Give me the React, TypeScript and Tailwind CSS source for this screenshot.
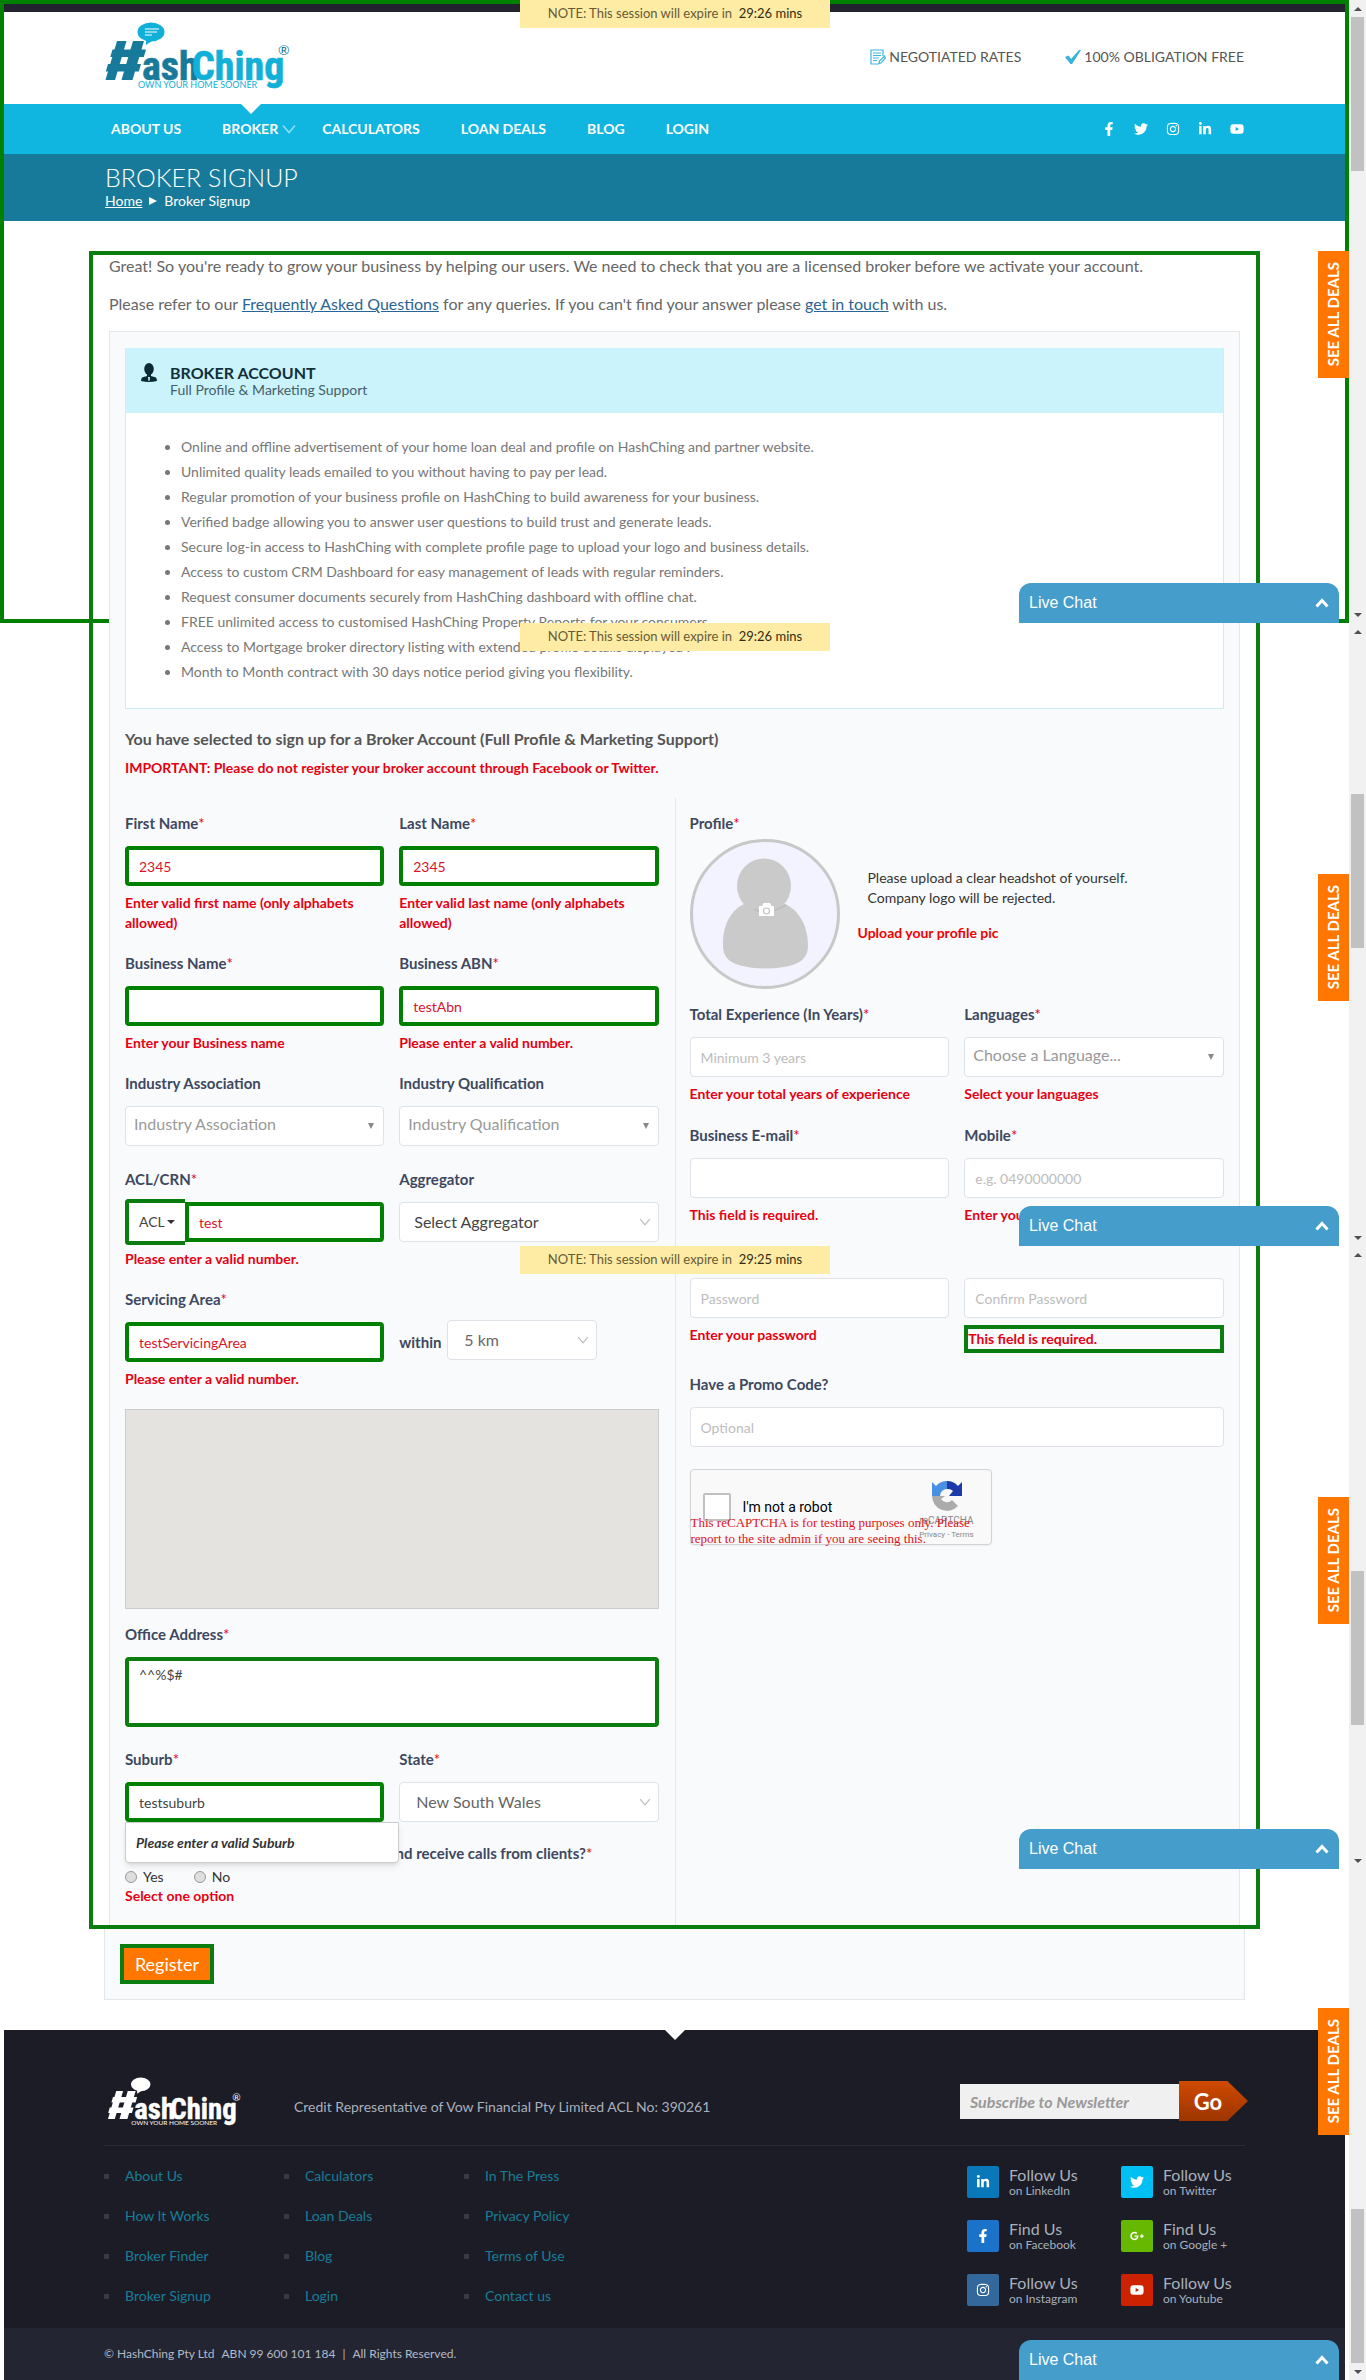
import React from "react";
import {
  FaFacebookF,
  FaTwitter,
  FaInstagram,
  FaLinkedinIn,
  FaYoutube,
  FaGooglePlusG,
} from "react-icons/fa";

function Logo({ className, mono = false }: { className: string; mono?: boolean }) {
  const dark = mono ? "#ffffff" : "#187a9a";
  const light = mono ? "#ffffff" : "#10b0d8";
  const font = "'Liberation Sans Narrow', 'Roboto Condensed', Roboto, sans-serif";
  return (
    <svg viewBox="0 0 200 80" className={className} role="img" aria-label="HashChing, own your home sooner">
      <ellipse cx="51" cy="17" rx="13.5" ry="9.5" fill={light} />
      <path d="M46 24 L46 30 L55 24 Z" fill={light} />
      {!mono && (
        <path d="M45 14 H59 M45 17 H57 M45 20 H52" stroke="#fff" strokeWidth="1.2" fill="none" />
      )}
      <g fill={dark}>
        <path d="M17 26 H26.500 L15 65 H5.500 Z" />
        <path d="M33 26 H44 L32.500 65 H21.500 Z" />
        <path d="M12.500 34.500 H46 L43.800 42 H10.300 Z" />
        <path d="M8 49 H41 L38.800 56.500 H5.800 Z" />
      </g>
      <text x="42" y="65" fontFamily={font} fontWeight="700" fontSize="40" fill={dark} stroke={dark} strokeWidth="0.600">ash</text>
      <text x="92" y="65" fontFamily={font} fontWeight="700" fontSize="40" fill={light} stroke={light} strokeWidth="0.600">Ching</text>
      <text x="178" y="40" fontFamily="Lato, sans-serif" fontSize="14" fill={dark}>®</text>
      <text x="38" y="73" fontFamily="Lato, sans-serif" fontSize="9" fill={light}>OWN YOUR HOME SOONER</text>
    </svg>
  );
}

function Chevron({ className }: { className: string }) {
  return (
    <svg viewBox="0 0 14 10" className={className} fill="none" stroke="currentColor" strokeWidth="1.5" aria-hidden="true">
      <path d="M1 1.500 L7 8.500 L13 1.500" />
    </svg>
  );
}

function Label({ id, text, required }: { id: string; text: string; required?: boolean }) {
  return (
    <label htmlFor={id} className="mb-[13px] block whitespace-nowrap text-[15px] font-bold leading-5 text-[#3d4860]">
      {text}
      {required && <span className="font-normal text-[#e60012]">*</span>}
    </label>
  );
}

function ErrorText({ children, boxed }: { children: React.ReactNode; boxed?: boolean }) {
  return (
    <p
      className={
        boxed
          ? "mt-[7px] border-4 border-[#0b7d10] text-sm font-bold leading-5 text-[#e60012]"
          : "mt-[7px] text-sm font-bold leading-5 text-[#e60012]"
      }
    >
      {children}
    </p>
  );
}

function Field(props: {
  id: string;
  label?: string;
  required?: boolean;
  value?: string;
  placeholder?: string;
  marked?: boolean;
  plain?: boolean;
  type?: string;
  error?: string;
  boxedError?: boolean;
}) {
  return (
    <div className="min-w-0">
      {props.label && <Label id={props.id} text={props.label} required={props.required} />}
      <input
        id={props.id}
        type={props.type ?? "text"}
        aria-label={props.label ? undefined : props.placeholder}
        defaultValue={props.value}
        placeholder={props.placeholder}
        className={
          props.marked
            ? props.plain
              ? "block h-10 w-full rounded-sm border-4 border-[#008000] bg-white px-2.5 text-sm text-[#444] outline-none"
              : "block h-10 w-full rounded-sm border-4 border-[#008000] bg-white px-2.5 text-sm text-[#d9142a] outline-none"
            : "block h-10 w-full rounded-sm border border-[#dfe2e6] bg-white px-2.5 text-sm text-[#444] outline-none placeholder:text-[#bdbdbd]"
        }
      />
      {props.error && <ErrorText boxed={props.boxedError}>{props.error}</ErrorText>}
    </div>
  );
}

function Picker(props: {
  id: string;
  label?: string;
  required?: boolean;
  option: string;
  tone: "muted" | "dark" | "mid";
  error?: string;
}) {
  const muted = props.tone === "muted";
  return (
    <div className="min-w-0">
      {props.label && <Label id={props.id} text={props.label} required={props.required} />}
      <div className="relative">
        <select
          id={props.id}
          aria-label={props.label ? undefined : props.option}
          className={
            muted
              ? "block h-10 w-full appearance-none rounded-sm border border-[#dfe2e6] bg-white pb-1 pl-2 text-base text-[#999] outline-none"
              : props.tone === "dark"
                ? "block h-10 w-full appearance-none rounded-sm border border-[#dfe2e6] bg-white pl-3.5 text-base text-[#444] outline-none"
                : "block h-10 w-full appearance-none rounded-sm border border-[#dfe2e6] bg-white pl-4 text-base text-[#666] outline-none"
          }
        >
          <option>{props.option}</option>
        </select>
        {muted ? (
          <svg viewBox="0 0 6 6" className="pointer-events-none absolute right-2.5 top-[17px] size-1.5 fill-[#888]" aria-hidden="true">
            <path d="M0 0 H6 L3 6 Z" />
          </svg>
        ) : (
          <Chevron className="pointer-events-none absolute right-2 top-4 h-2 w-3 text-[#bbb]" />
        )}
      </div>
      {props.error && <ErrorText>{props.error}</ErrorText>}
    </div>
  );
}

const benefits = [
  "Online and offline advertisement of your home loan deal and profile on HashChing and partner website.",
  "Unlimited quality leads emailed to you without having to pay per lead.",
  "Regular promotion of your business profile on HashChing to build awareness for your business.",
  "Verified badge allowing you to answer user questions to build trust and generate leads.",
  "Secure log-in access to HashChing with complete profile page to upload your logo and business details.",
  "Access to custom CRM Dashboard for easy management of leads with regular reminders.",
  "Request consumer documents securely from HashChing dashboard with offline chat.",
  "FREE unlimited access to customised HashChing Property Reports for your consumers.",
  "Access to Mortgage broker directory listing with extended profile details displayed .",
  "Month to Month contract with 30 days notice period giving you flexibility.",
];

const footerLinks = [
  ["About Us", "How It Works", "Broker Finder", "Broker Signup"],
  ["Calculators", "Loan Deals", "Blog", "Login"],
  ["In The Press", "Privacy Policy", "Terms of Use", "Contact us"],
];

const socials = [
  { title: "Follow Us", sub: "on LinkedIn", Icon: FaLinkedinIn, tile: "bg-[#0878b8]" },
  { title: "Follow Us", sub: "on Twitter", Icon: FaTwitter, tile: "bg-[#00bff3]" },
  { title: "Find Us", sub: "on Facebook", Icon: FaFacebookF, tile: "bg-[#1a73c8]" },
  { title: "Find Us", sub: "on Google +", Icon: FaGooglePlusG, tile: "bg-[#67b800]" },
  { title: "Follow Us", sub: "on Instagram", Icon: FaInstagram, tile: "bg-[#32689b]" },
  { title: "Follow Us", sub: "on Youtube", Icon: FaYoutube, tile: "bg-[#cc2200]" },
];

function SessionNote({ time, place }: { time: string; place: string }) {
  return (
    <div className={place}>
      NOTE: This session will expire in&nbsp; <span className="text-[#332b12]">{time} mins</span>
    </div>
  );
}

function LiveChat({ place }: { place: string }) {
  return (
    <button type="button" className={place}>
      <span>Live Chat</span>
      <svg viewBox="0 0 14 10" className="h-2.5 w-3.5" fill="none" stroke="#fff" strokeWidth="3" aria-hidden="true">
        <path d="M1.500 8.500 L7 2.500 L12.500 8.500" />
      </svg>
    </button>
  );
}

function DealsTab({ place }: { place: string }) {
  return (
    <a href="#deals" className={place}>
      <span className="rotate-180 text-[15px] font-bold text-white [writing-mode:vertical-rl]">SEE ALL DEALS</span>
    </a>
  );
}

function ScrollArrow({ down }: { down?: boolean }) {
  return (
    <span className="flex h-[17px] shrink-0 items-center justify-center">
      <svg viewBox="0 0 8 4" className="h-1 w-2 fill-[#505050]" aria-hidden="true">
        <path d={down ? "M0 0 H8 L4 4 Z" : "M0 4 H8 L4 0 Z"} />
      </svg>
    </span>
  );
}

function Header() {
  return (
    <header>
      <div className="h-2 bg-[#23232f]" />
      <div className="mx-auto flex h-[92px] max-w-[1139px] items-start justify-between">
        <a href="#home" className="-ml-[5px] pt-[3px]"><Logo className="h-20 w-[200px]" /></a>
        <div className="flex gap-[44px] pt-[35px] text-sm leading-5 text-[#555]">
          <span className="flex items-center gap-[3px]">
            <svg viewBox="0 0 16 16" className="size-4" fill="none" stroke="#3db8dc" strokeWidth="1.200" aria-hidden="true">
              <path d="M13 7 V1 H1 V15 H9 M3 4 H11 M3 6.500 H11 M3 9 H9 M3 11.500 H7 M9 14.500 L9.500 12 L14.500 7 L15.500 9 L11 14 Z" />
            </svg>
            NEGOTIATED RATES
          </span>
          <span className="flex items-center gap-[3px]">
            <svg viewBox="0 0 16 14" className="h-3.5 w-4" aria-hidden="true">
              <path d="M0 7 L3.500 5.500 L6 9 L14 0 H16 L7 14 H5.500 Z" fill="#35b3dc" />
            </svg>
            100% OBLIGATION FREE
          </span>
        </div>
      </div>
      <nav className="bg-[#10b5e0]">
        <div className="mx-auto flex h-[50px] max-w-[1139px] items-center text-sm font-bold text-white">
          <a href="#about" className="pl-1.5">ABOUT US</a>
          <a href="#broker" className="relative flex h-full items-center gap-1 pl-[41px] pr-[26px]">
            <span>BROKER</span>
            <Chevron className="h-2.5 w-3.5 text-[#8fe0f5]" />
            <svg viewBox="0 0 20 10" className="absolute left-[60px] top-0 h-2.5 w-5 fill-white" aria-hidden="true">
              <path d="M0 0 H20 L10 10 Z" />
            </svg>
          </a>
          <a href="#calculators">CALCULATORS</a>
          <a href="#loans" className="ml-[41px]">LOAN DEALS</a>
          <a href="#blog" className="ml-[41px]">BLOG</a>
          <a href="#login" className="ml-[41px]">LOGIN</a>
          <span className="ml-auto flex items-center gap-[18px] text-sm">
            <a href="#facebook" aria-label="Facebook"><FaFacebookF /></a>
            <a href="#twitter" aria-label="Twitter"><FaTwitter /></a>
            <a href="#instagram" aria-label="Instagram"><FaInstagram /></a>
            <a href="#linkedin" aria-label="LinkedIn"><FaLinkedinIn /></a>
            <a href="#youtube" aria-label="YouTube"><FaYoutube /></a>
          </span>
        </div>
      </nav>
      <div className="bg-[#187a9a]">
        <div className="mx-auto h-[67px] max-w-[1139px] pt-[7px] text-white">
          <h1 className="text-[25px] font-light leading-8">BROKER SIGNUP</h1>
          <p className="flex items-center gap-[7px] text-sm leading-4">
            <a href="#home" className="underline">Home</a>
            <svg viewBox="0 0 8 8" className="size-2 fill-white" aria-hidden="true"><path d="M0 0 L8 4 L0 8 Z" /></svg>
            <span>Broker Signup</span>
          </p>
        </div>
      </div>
    </header>
  );
}

function LeftColumn() {
  return (
    <div className="pb-[19px] pr-4 pt-[15px]">
      <div className="mb-5 grid grid-cols-2 gap-[15px]">
        <Field id="first" label="First Name" required marked value="2345" error="Enter valid first name (only alphabets allowed)" />
        <Field id="last" label="Last Name" required marked value="2345" error="Enter valid last name (only alphabets allowed)" />
      </div>
      <div className="mb-5 grid grid-cols-2 gap-[15px]">
        <Field id="bname" label="Business Name" required marked error="Enter your Business name" />
        <Field id="abn" label="Business ABN" required marked value="testAbn" error="Please enter a valid number." />
      </div>
      <div className="mb-[23px] grid grid-cols-2 gap-[15px]">
        <Picker id="assoc" label="Industry Association" option="Industry Association" tone="muted" />
        <Picker id="qual" label="Industry Qualification" option="Industry Qualification" tone="muted" />
      </div>
      <div className="mb-5 grid grid-cols-2 gap-[15px]">
        <div>
          <Label id="acl" text="ACL/CRN" required />
          <div className="-my-[3px] flex items-center">
            <button type="button" className="flex h-[46px] w-[60px] items-center gap-0.5 rounded-l-sm border-4 border-r-0 border-[#0b7d10] bg-white pl-2.5 text-sm text-[#444]">
              ACL
              <svg viewBox="0 0 8 4" className="h-1 w-2 fill-[#333]" aria-hidden="true"><path d="M0 0 H8 L4 4 Z" /></svg>
            </button>
            <input id="acl" defaultValue="test" className="h-10 min-w-0 flex-1 rounded-r-sm border-4 border-[#008000] bg-white px-2.5 text-sm text-[#d9142a] outline-none" />
          </div>
          <ErrorText>Please enter a valid number.</ErrorText>
        </div>
        <Picker id="agg" label="Aggregator" option="Select Aggregator" tone="dark" />
      </div>
      <div className="mb-5 grid grid-cols-2 gap-[15px]">
        <Field id="area" label="Servicing Area" required marked value="testServicingArea" error="Please enter a valid number." />
        <div className="flex items-start gap-1 pt-[31px]">
          <label htmlFor="within" className="w-11 pt-3 text-[15px] font-bold leading-5 text-[#3d4860]">within</label>
          <div className="w-[150px]"><Picker id="within" option="5 km" tone="mid" /></div>
        </div>
      </div>
      <div className="mb-[15px] h-[200px] border border-[#cccccc] bg-[#e5e3df]" />
      <div className="mb-[22px]">
        <Label id="office" text="Office Address" required />
        <textarea id="office" defaultValue="^^%$#" className="block h-[70px] w-full resize-none rounded-sm border-4 border-[#0b7d10] bg-white px-2.5 py-1 text-sm text-[#444] outline-none" />
      </div>
      <div className="relative mb-[21px] grid grid-cols-2 gap-[15px]">
        <Field id="suburb" label="Suburb" required marked plain value="testsuburb" />
        <Picker id="state" label="State" required option="New South Wales" tone="mid" />
        <div className="absolute left-0 top-full z-10 flex h-[41px] w-[274px] items-center rounded-b border border-[#ccc] bg-white px-2.5 text-sm font-bold italic text-[#333] shadow-md">
          Please enter a valid Suburb
        </div>
      </div>
      <fieldset>
        <legend className="whitespace-nowrap text-[15px] font-bold leading-5 text-[#3d4860]">
          Are you happy to get listed on our sites and receive calls from clients?<span className="font-normal text-[#e60012]">*</span>
        </legend>
        <div className="mt-1 flex h-5 items-center gap-[30px] text-sm text-[#333]">
          <label className="flex items-center gap-1.5">
            <input type="radio" name="calls" className="size-3 appearance-none rounded-full border border-[#999] bg-[#dedede]" />
            Yes
          </label>
          <label className="flex items-center gap-1.5">
            <input type="radio" name="calls" className="size-3 appearance-none rounded-full border border-[#999] bg-[#dedede]" />
            No
          </label>
        </div>
        <p className="-mt-px text-sm font-bold leading-5 text-[#e60012]">Select one option</p>
      </fieldset>
    </div>
  );
}

function Captcha() {
  return (
    <div className="relative mt-[22px] h-[76px] w-[302px] rounded-sm border border-[#d3d3d3] bg-[#f9f9f9] font-[Roboto,sans-serif] shadow-xs">
      <div className="flex h-full items-center">
        <label className="flex flex-1 items-center gap-3 pl-3 text-sm text-black">
          <input type="checkbox" className="size-7 appearance-none rounded-xs border-2 border-[#c1c1c1] bg-white" />
          I'm not a robot
        </label>
        <div className="flex w-[76px] flex-col items-center self-start pr-3 pt-2.5 text-[#888]">
          <svg viewBox="0 0 32 32" className="size-8" aria-hidden="true">
            <path d="M16 1 A15 15 0 0 0 5 6 L1 2 V16 H9 A7 7 0 0 1 16 9 Z" fill="#4a90e2" />
            <path d="M16 1 A15 15 0 0 1 27 6 L31 2 V16 H18 L22 11 A7 7 0 0 0 16 9 Z" fill="#1c3aa9" />
            <path d="M1 16 A15 15 0 0 0 27 26 L21 20 A7 7 0 0 1 10 19 L14 16 Z" fill="#ababab" />
          </svg>
          <span className="mt-[3px] text-[10px] leading-3">reCAPTCHA</span>
          <span className="mt-0.5 whitespace-nowrap text-[8px] leading-3">Privacy - Terms</span>
        </div>
      </div>
      <p className="absolute left-0 top-[45px] whitespace-nowrap font-['Liberation_Serif',serif] text-[13px] leading-4 text-[#e01020]">
        This reCAPTCHA is for testing purposes only. Please
        <br />
        report to the site admin if you are seeing this.
      </p>
    </div>
  );
}

function RightColumn() {
  return (
    <div className="border-l border-[#e3e6ea] pl-3.5 pt-[15px]">
      <p className="mb-1.5 text-[15px] font-bold leading-5 text-[#3d4860]">
        Profile<span className="font-normal text-[#e60012]">*</span>
      </p>
      <div className="mb-[15px] flex items-start">
        <svg viewBox="0 0 150 150" className="size-[150px] shrink-0" role="img" aria-label="Profile photo">
          <circle cx="75" cy="75" r="73.500" fill="#f3f3ff" stroke="#c8c8c8" strokeWidth="3" />
          <path d="M33 105 C33 82 44 68 57 64 H92 C106 68 118 84 118 106 C118 112 117 115 114 119 C104 133 47 133 37 119 C34 115 33 112 33 105 Z" fill="#cacaca" />
          <ellipse cx="74" cy="47" rx="27" ry="27.500" fill="#cacaca" />
          <path d="M64 70 Q76 78 96 66" stroke="#bdbdbd" strokeWidth="2" fill="none" />
          <path d="M69 67 H72 L73.500 64 H80 L81.500 67 H84 V77 H69 Z" fill="#fff" />
          <circle cx="76.500" cy="72" r="3" fill="none" stroke="#c4c4c4" strokeWidth="1.200" />
        </svg>
        <div className="pl-[18px] pt-[29px]">
          <p className="pl-2.5 text-sm leading-5 text-[#333]">
            Please upload a clear headshot of yourself.
            <br />
            Company logo will be rejected.
          </p>
          <p className="mt-[15px] text-sm font-bold leading-5 text-[#f00000]">Upload your profile pic</p>
        </div>
      </div>
      <div className="mb-[21px] grid grid-cols-2 gap-[15px]">
        <Field id="exp" label="Total Experience (In Years)" required placeholder="Minimum 3 years" error="Enter your total years of experience" />
        <Picker id="lang" label="Languages" required option="Choose a Language..." tone="muted" error="Select your languages" />
      </div>
      <div className="mb-[53px] grid grid-cols-2 gap-[15px]">
        <Field id="mail" type="email" label="Business E-mail" required error="This field is required." />
        <Field id="mobile" type="tel" label="Mobile" required placeholder="e.g. 0490000000" error="Enter your mobile number" />
      </div>
      <div className="mb-[21px] grid grid-cols-2 gap-[15px]">
        <Field id="pw" type="password" placeholder="Password" error="Enter your password" />
        <Field id="pw2" type="password" placeholder="Confirm Password" error="This field is required." boxedError />
      </div>
      <Field id="promo" label="Have a Promo Code?" placeholder="Optional" />
      <Captcha />
    </div>
  );
}

function Footer() {
  return (
    <footer className="relative mt-[30px] bg-[#1b1c26]">
      <svg viewBox="0 0 20 10" className="absolute left-1/2 top-0 h-2.5 w-5 -translate-x-1/2 fill-white" aria-hidden="true">
        <path d="M0 0 H20 L10 10 Z" />
      </svg>
      <div className="mx-auto max-w-[1141px]">
        <div className="flex items-center border-b border-[#2b2d3b] pb-[15px] pt-[42px]">
          <a href="#home"><Logo mono className="h-[58px] w-36" /></a>
          <p className="ml-[46px] mt-3 text-sm text-[#a9b0bd]">Credit Representative of Vow Financial Pty Limited ACL No: 390261</p>
          <form className="-mr-[3px] ml-auto flex items-center">
            <input
              type="email"
              aria-label="Subscribe to Newsletter"
              placeholder="Subscribe to Newsletter"
              className="h-[35px] w-[219px] bg-[#f0f0f0] px-2.5 text-base font-bold italic outline-none placeholder:text-[#999]"
            />
            <button type="button" className="h-10 w-[69px] bg-gradient-to-b from-[#d04a00] to-[#9c3500] pr-[11px] text-[22px] font-bold text-white [clip-path:polygon(0_0,70%_0,100%_50%,70%_100%,0_100%)]">
              Go
            </button>
          </form>
        </div>
        <div className="flex justify-between">
          <div className="flex pb-3 pt-2.5">
            {footerLinks.map((col) => (
              <ul key={col[0]} className="w-[180px]">
                {col.map((item) => (
                  <li key={item} className="flex h-10 items-center gap-4 text-sm before:size-[5px] before:bg-[#363a48] before:content-['']">
                    <a href="#footer" className="text-[#1a7c98]">{item}</a>
                  </li>
                ))}
              </ul>
            ))}
          </div>
          <ul className="grid grid-cols-[154px_124px] content-start gap-y-[22px] pt-5">
            {socials.map(({ title, sub, Icon, tile }) => (
              <li key={sub}>
                <a href="#social" className="flex items-center gap-2.5 text-[#a9b0bd]">
                  <span className={tile + " flex size-8 items-center justify-center rounded-xs text-sm text-white"}><Icon /></span>
                  <span>
                    <span className="block text-base leading-[17px]">{title}</span>
                    <span className="block text-xs leading-[15px]">{sub}</span>
                  </span>
                </a>
              </li>
            ))}
          </ul>
        </div>
      </div>
      <div className="bg-[#232533]">
        <p className="mx-auto flex h-[52px] max-w-[1141px] items-center gap-[7px] text-xs text-[#b4bac6]">
          <span>© HashChing Pty Ltd</span>
          <span>ABN 99 600 101 184</span>
          <span>|</span>
          <span>All Rights Reserved.</span>
        </p>
      </div>
    </footer>
  );
}

export default function App() {
  return (
    <div className="flex bg-white font-[Lato,sans-serif] leading-normal">
      <div className="relative min-w-0 flex-1">
        <div className="pointer-events-none absolute inset-x-0 top-0 h-[623px] border-4 border-[#008000]" />
        <div className="relative px-1 pt-1">
          <Header />
          <main>
            <section className="mx-auto mt-[30px] max-w-[1171px] border-4 border-[#0b7d10] px-4 text-base leading-[22px] text-[#666]">
              <p className="mb-4">
                Great! So you're ready to grow your business by helping our users. We need to check that you are a licensed broker before we activate your account.
              </p>
              <p className="mb-4">
                Please refer to our <a href="#faq" className="text-[#2a6496] underline">Frequently Asked Questions</a> for any queries. If you can't find your answer please{" "}
                <a href="#contact" className="text-[#2a6496] underline">get in touch</a> with us.
              </p>
              <div className="border border-b-0 border-[#e3e6ea] bg-[#f9fafc] px-[15px] pt-4">
                <div className="border border-t-0 border-[#ccedf4] bg-white">
                  <div className="flex bg-[#cbf3fc] pb-[15px] pt-4">
                    <svg viewBox="0 0 16 19" className="-mt-px ml-[15px] mr-[13px] h-[19px] w-4 fill-[#0c2a33]" aria-hidden="true">
                      <ellipse cx="8" cy="6" rx="4.800" ry="6" />
                      <path d="M6 11 H10 V13 L15 14.500 Q16 16 16 18 Q12 19 8 19 Q4 19 0 18 Q0 16 1 14.500 L6 13 Z" />
                      <path d="M7 14 H9 L8.500 18 H7.500 Z" fill="#cbf3fc" />
                    </svg>
                    <div>
                      <h2 className="text-base font-bold leading-[18px] text-[#12303a]">BROKER ACCOUNT</h2>
                      <p className="text-sm leading-4 text-[#44606a]">Full Profile &amp; Marketing Support</p>
                    </div>
                  </div>
                  <ul className="list-disc pb-6 pl-[55px] pt-[21px] text-sm leading-[25px] text-[#777]">
                    {benefits.map((b) => (
                      <li key={b}>{b}</li>
                    ))}
                  </ul>
                </div>
                <h3 className="mt-[18px] text-base font-bold leading-6 text-[#555]">
                  You have selected to sign up for a Broker Account (Full Profile &amp; Marketing Support)
                </h3>
                <p className="mt-[7px] text-sm font-bold leading-5 text-[#e60012]">
                  IMPORTANT: Please do not register your broker account through Facebook or Twitter.
                </p>
                <form className="mt-5 grid grid-cols-2">
                  <LeftColumn />
                  <RightColumn />
                </form>
              </div>
            </section>
            <div className="mx-auto max-w-[1141px] border border-t-0 border-[#e3e6ea] bg-[#f9fafc] p-[15px]">
              <button type="button" className="h-10 w-[94px] border-4 border-[#0b7d10] bg-[#ff7700] text-lg leading-none text-white">Register</button>
            </div>
          </main>
          <Footer />
        </div>

        <SessionNote time="29:26" place="absolute left-[520px] top-0 z-20 flex h-7 w-[310px] items-center justify-center whitespace-pre bg-[#feeca5] text-[13px] text-[#665a35]" />
        <SessionNote time="29:26" place="absolute left-[520px] top-[623px] z-20 flex h-7 w-[310px] items-center justify-center whitespace-pre bg-[#feeca5] text-[13px] text-[#665a35]" />
        <SessionNote time="29:25" place="absolute left-[520px] top-[1246px] z-20 flex h-7 w-[310px] items-center justify-center whitespace-pre bg-[#feeca5] text-[13px] text-[#665a35]" />

        <LiveChat place="absolute right-2.5 top-[583px] z-20 flex h-10 w-80 items-center justify-between rounded-t-xl bg-[#449dcb] px-2.5 font-['Liberation_Sans',sans-serif] text-base text-white" />
        <LiveChat place="absolute right-2.5 top-[1206px] z-20 flex h-10 w-80 items-center justify-between rounded-t-xl bg-[#449dcb] px-2.5 font-['Liberation_Sans',sans-serif] text-base text-white" />
        <LiveChat place="absolute right-2.5 top-[1829px] z-20 flex h-10 w-80 items-center justify-between rounded-t-xl bg-[#449dcb] px-2.5 font-['Liberation_Sans',sans-serif] text-base text-white" />
        <LiveChat place="absolute bottom-0 right-2.5 z-20 flex h-10 w-80 items-center justify-between rounded-t-xl bg-[#449dcb] px-2.5 font-['Liberation_Sans',sans-serif] text-base text-white" />

        <DealsTab place="absolute right-0 top-[251px] z-20 flex h-[127px] w-[31px] items-center justify-center bg-[#ff7700]" />
        <DealsTab place="absolute right-0 top-[874px] z-20 flex h-[127px] w-[31px] items-center justify-center bg-[#ff7700]" />
        <DealsTab place="absolute right-0 top-[1497px] z-20 flex h-[127px] w-[31px] items-center justify-center bg-[#ff7700]" />
        <DealsTab place="absolute right-0 top-[2008px] z-20 flex h-[127px] w-[31px] items-center justify-center bg-[#ff7700]" />
      </div>

      <div className="w-[17px] shrink-0 bg-[#f1f1f1]" aria-hidden="true">
        <div className="flex h-[623px] flex-col">
          <ScrollArrow />
          <div className="mx-auto h-[154px] w-[13px] bg-[#c1c1c1]" />
          <div className="flex-1" />
          <ScrollArrow down />
        </div>
        <div className="flex h-[623px] flex-col">
          <ScrollArrow />
          <div className="mx-auto mt-[154px] h-[154px] w-[13px] bg-[#c1c1c1]" />
          <div className="flex-1" />
          <ScrollArrow down />
        </div>
        <div className="flex h-[623px] flex-col">
          <ScrollArrow />
          <div className="mx-auto mt-[308px] h-[154px] w-[13px] bg-[#c1c1c1]" />
          <div className="flex-1" />
          <ScrollArrow down />
        </div>
        <div className="flex h-[511px] flex-col justify-end">
          <div className="mx-auto h-[154px] w-[13px] bg-[#c1c1c1]" />
          <ScrollArrow down />
        </div>
      </div>
    </div>
  );
}
